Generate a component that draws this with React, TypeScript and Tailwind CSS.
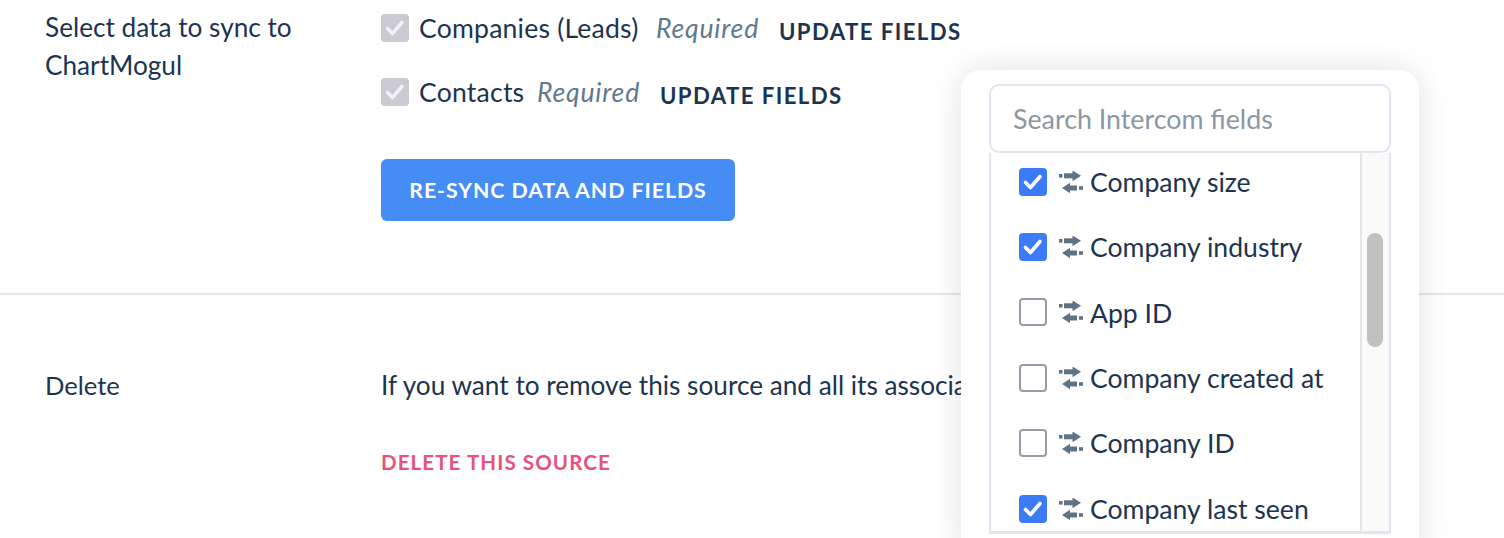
const FONT = "font-['Lato','Liberation_Sans',sans-serif]";

function SyncIcon() {
  return (
    <svg width="25" height="22" viewBox="0 0 25 22" className="shrink-0 text-[#5f7386]" fill="currentColor">
      <rect x="0" y="3" width="3.5" height="3.6" />
      <rect x="5" y="2.3" width="11" height="5" />
      <polygon points="13.5,-0.6 22,4.8 13.5,10.2" />
      <polygon points="3,17 11,11.8 11,22.2" />
      <rect x="9" y="14.5" width="9" height="5" />
      <rect x="20" y="15.2" width="4" height="3.6" />
    </svg>
  );
}

function Check({ className }: { className: string }) {
  return (
    <svg viewBox="0 0 28 28" className={className} fill="none" stroke="currentColor" strokeWidth="3.6" strokeLinecap="round" strokeLinejoin="round">
      <path d="M6.5 14.5 L11.5 19.5 L21 8.5" />
    </svg>
  );
}

function Required({ label, width }: { label: string; width: string }) {
  return (
    <div className="flex h-[28px] items-center">
      <span className="flex h-[28px] w-[28px] items-center justify-center rounded-[4px] bg-[#c9cad2]">
        <Check className="h-[28px] w-[28px] text-[#f1f1f4]" />
      </span>
      <span className={`ml-[10px] mt-[1px] text-[26.6px] tracking-[0.2px] text-[#1d3450] ${width}`}>{label}</span>
      <span className="ml-[16px] mt-[1px] w-[102px] whitespace-nowrap text-[26.6px] italic tracking-[0.8px] text-[#5f7a8f]">Required</span>
      <span className="ml-[21px] mt-[7px] whitespace-nowrap text-[22.2px] font-bold tracking-[1.4px] text-[#1d3450]">UPDATE FIELDS</span>
    </div>
  );
}

const FIELDS: [string, boolean][] = [
  ["Company size", true],
  ["Company industry", true],
  ["App ID", false],
  ["Company created at", false],
  ["Company ID", false],
  ["Company last seen", true],
];

function FieldRow({ label, checked }: { label: string; checked: boolean }) {
  return (
    <div className="flex h-[65.4px] items-center">
      {checked ? (
        <span className="flex h-[28px] w-[28px] items-center justify-center rounded-[4px] bg-[#3b7cf6]">
          <Check className="h-[28px] w-[28px] text-white" />
        </span>
      ) : (
        <span className="h-[28px] w-[28px] rounded-[4px] border-2 border-[#9a9ba8] bg-white" />
      )}
      <span className="ml-[12px]"><SyncIcon /></span>
      <span className="ml-[6px] mt-[2px] whitespace-nowrap text-[26.6px] text-[#1d3450]">{label}</span>
    </div>
  );
}

export default function App() {
  return (
    <div className={`relative h-[538px] w-[1504px] overflow-hidden bg-white ${FONT}`}>
      <section className="flex h-[293px] pl-[45px] pt-[8px]">
        <div className="w-[336px] text-[26.2px] leading-[38px] text-[#1d3450]">
          Select data to sync to<br />ChartMogul
        </div>
        <div className="flex flex-col pt-[6px]">
          <Required label="Companies (Leads)" width="w-[221px] whitespace-nowrap" />
          <div className="mt-[36px]">
            <Required label="Contacts" width="w-[102px] whitespace-nowrap" />
          </div>
          <button className="mt-[53px] h-[62px] w-[354px] rounded-[6px] bg-[#458df5] pt-[1px] text-[21.3px] font-bold tracking-[0.95px] text-white">
            RE-SYNC DATA AND FIELDS
          </button>
        </div>
      </section>
      <div className="h-[2px] bg-[#e3e6ee]" />
      <section className="flex pl-[45px] pt-[71px]">
        <div className="w-[336px] text-[25.6px] leading-[38px] text-[#1d3450]">Delete</div>
        <div className="flex flex-col">
          <p className="whitespace-nowrap text-[26.2px] leading-[38px] text-[#1d3450]">
            If you want to remove this source and all its associated data, click below.
          </p>
          <span className="mt-[43px] text-[20.5px] font-bold tracking-[1.1px] text-[#e8517b]">DELETE THIS SOURCE</span>
        </div>
      </section>

      <div className="absolute left-[961px] top-[70px] h-[490px] w-[458px] rounded-[20px] bg-white px-[28px] pt-[14px] shadow-[0_0_32px_rgba(0,0,0,0.12)]">
        <div className="flex h-[69px] items-center rounded-[10px] border-2 border-[#e1e5ef] bg-white pl-[22px] pt-[2px] text-[26.8px] text-[#8a97a5]">
          Search Intercom fields
        </div>
        <div className="flex h-[381px] border-x-2 border-b-[3px] border-[#e1e5ef]">
          <div className="flex-1 overflow-hidden pl-[28px]">
            <div className="-mt-[4px]">
              {FIELDS.map(([label, checked]) => (
                <FieldRow key={label} label={label} checked={checked} />
              ))}
            </div>
          </div>
          <div className="w-[29px] border-l-2 border-[#e6e6e6] bg-[#fafafa] pl-[5px] pt-[80px]">
            <div className="h-[114px] w-[16px] rounded-full bg-[#c1c1c1]" />
          </div>
        </div>
      </div>
    </div>
  );
}
